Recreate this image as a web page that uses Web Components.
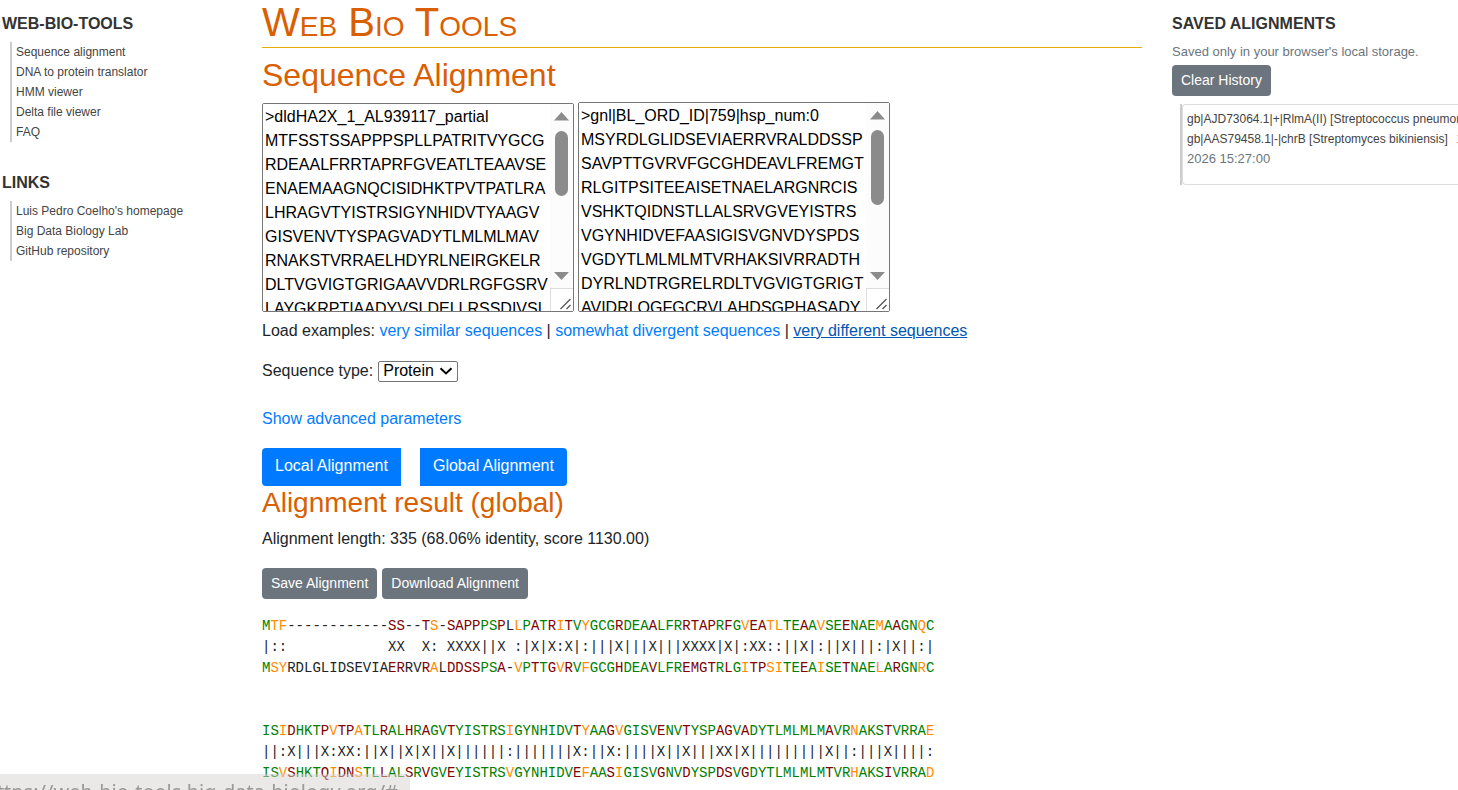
<!DOCTYPE html>
<html lang="en">
<head>
<meta charset="utf-8">
<title>Web Bio Tools – Sequence Alignment</title>
<style>
body { margin: 0; background: #fff; color: #212529; font: 16px/24px "Liberation Sans", Arial, sans-serif; }
</style>
</head>
<body>
<bio-app></bio-app>
<script>
function define(name, html, setup) {
  const template = document.createElement('template');
  template.innerHTML = html;
  customElements.define(name, class extends HTMLElement {
    connectedCallback() {
      if (this.shadowRoot) return;
      this.attachShadow({ mode: 'open' }).append(template.content.cloneNode(true));
      if (setup) setup(this, this.shadowRoot);
    }
  });
}

define('side-section', `
<style>
:host { display: block; }
h2 { margin: 0 0 6px; font-size: 16px; line-height: 24px; font-weight: 600; color: #333; text-transform: uppercase; }
</style>
<section><h2></h2><slot></slot></section>`, (el, root) => {
  root.querySelector('h2').textContent = el.getAttribute('heading');
});

define('link-list', `
<style>
:host { display: block; margin-left: 8px; border-left: 2px solid #ccc; padding-left: 4px; font-size: 12px; line-height: 20px; }
::slotted(a) { display: block; color: #444; text-decoration: none; }
</style>
<slot></slot>`);

define('bio-button', `
<style>
:host { display: inline-block; }
button { display: block; box-sizing: border-box; height: 38px; padding: 0 13px 2px; border: 0; border-radius: 4px; background: #007bff; color: #fff; font: inherit; white-space: nowrap; }
:host([small]) button { height: 31px; padding: 0 9px 2px; font-size: 14px; background: #6c757d; }
:host([edge="start"]) button { border-radius: 4px 0 0 4px; }
:host([edge="end"]) button { border-radius: 0 4px 4px 0; }
</style>
<button type="button"><slot></slot></button>`);

define('sequence-input', `
<style>
:host { display: block; position: relative; box-sizing: border-box; width: 312px; height: 210px; border: 1px solid #767676; border-radius: 2px; overflow: hidden; background: #fff; }
:host([short]) { height: 209px; }
textarea { display: block; box-sizing: border-box; width: 100%; height: 100%; margin: 0; padding: 1px 23px 1px 2px; border: 0; outline: 0; resize: none; overflow: hidden; white-space: pre; background: #fff; color: #000; font: inherit; }
.bar { position: absolute; top: 0; right: 0; bottom: 0; width: 23px; display: flex; flex-direction: column; align-items: center; background: #fcfcfc; }
svg { display: block; }
.thumb { width: 13px; height: 65px; border-radius: 7px; background: #8b8b8b; }
:host(:not([short])) .thumb { height: 75px; }
.space { flex: 1; }
.grip { border-top: 1px solid #ddd; border-left: 1px solid #ddd; background: #fff; }
</style>
<textarea spellcheck="false"></textarea>
<div class="bar" aria-hidden="true">
<svg width="23" height="27"><path d="M4 16.5 11.5 8 19 16.5z" fill="#8b8b8b"/></svg>
<div class="thumb"></div><div class="space"></div>
<svg width="23" height="18"><path d="M4 2 11.5 10 19 2z" fill="#8b8b8b"/></svg>
<svg class="grip" width="22" height="22"><path d="M9.500 20 19.500 10M15.500 20 19.500 16" stroke="#555" stroke-width="1.3" fill="none"/></svg>
</div>`, (el, root) => {
  const area = root.querySelector('textarea');
  area.value = el.getAttribute('value');
  area.setAttribute('aria-label', el.getAttribute('label'));
});

define('alignment-view', `
<style>
:host { display: block; }
pre { margin: 0; font: 14px/21px "Liberation Mono", "Courier New", monospace; color: #212529; }
.same { color: #008000; }
.close { color: #ff8c00; }
.differ { color: #800000; }
</style>
<pre></pre>`, (el, root) => {
  const kinds = { '|': 'same', ':': 'close', 'X': 'differ' };
  const [first, marks, second] = ['first', 'marks', 'second'].map(n => el.getAttribute(n));
  const pre = root.querySelector('pre');
  // Neighbouring residues with the same match mark share one coloured span.
  const colour = row => {
    for (let i = 0; i < row.length;) {
      let end = i + 1;
      while (end < row.length && marks[end] === marks[i]) end++;
      const span = document.createElement('span');
      if (kinds[marks[i]]) span.className = kinds[marks[i]];
      span.textContent = row.slice(i, end);
      pre.append(span);
      i = end;
    }
  };
  colour(first);
  pre.append('\n' + marks + '\n');
  colour(second);
});

define('saved-entry', `
<style>
:host { display: block; margin: 8px 0 0 8px; border-left: 2px solid #ccc; font-size: 12px; line-height: 20px; color: #444; }
article { border: 1px solid #ddd; border-right: 0; border-radius: 4px 0 0 4px; padding: 4px 0 15px 4px; }
div { white-space: nowrap; overflow: hidden; }
time { color: #6c757d; font-size: 13px; }
.start { margin-left: 5px; }
</style>
<article>
<div>gb|AJD73064.1|+|RlmA(II) [Streptococcus pneumoniae]</div>
<div>gb|AAS79458.1|-|chrB [Streptomyces bikiniensis] <time class="start">1</time></div>
<div><time>2026 15:27:00</time></div>
</article>`);

define('status-bubble', `
<style>
:host { position: fixed; left: 0; bottom: 0; width: 410px; height: 16px; overflow: hidden; background: rgba(215, 212, 209, .5); border-radius: 0 4px 0 0; color: #999; font: 20px/24px "Noto Sans", sans-serif; white-space: nowrap; }
div { display: flex; justify-content: flex-end; padding: 6px 12px 0 0; }
</style>
<div><slot></slot></div>`);

define('alignment-page', `
<style>
:host { display: block; min-width: 0; }
h1, h2, h3 { margin: 0; font-weight: 400; color: #d95f02; }
h1 { font-size: 40px; line-height: 44px; font-variant: small-caps; padding-bottom: 3px; border-bottom: 1px solid #e6ab02; }
h2 { font-size: 32px; line-height: 38px; margin: 8px 0; }
h3 { font-size: 28px; line-height: 33px; margin-bottom: 8px; }
p { margin: 0; }
a { color: #007bff; text-decoration: none; }
a.active { color: #0056b3; text-decoration: underline; }
.inputs { display: flex; align-items: flex-end; gap: 4px; margin-bottom: 7px; }
.type { margin: 16px 0 24px; display: flex; align-items: center; gap: 5px; }
.pick { display: inline-grid; align-items: center; }
select, .pick svg { grid-area: 1 / 1; }
select { appearance: none; box-sizing: border-box; width: 80px; height: 21px; margin: 0; padding: 0 4px; border: 1px solid #767676; border-radius: 2px; background: #fff; color: #000; font: inherit; line-height: 18px; }
.pick svg { justify-self: end; margin-right: 5px; pointer-events: none; }
.run { display: flex; gap: 19px; margin-top: 17px; }
.save { display: flex; gap: 5px; margin: 17px 0; }
alignment-view { margin-bottom: 42px; }
alignment-view:last-of-type { margin-bottom: 0; }
</style>
<main>
<h1>Web Bio Tools</h1>
<h2>Sequence Alignment</h2>
<div class="inputs">
<sequence-input short label="First sequence" value=">dldHA2X_1_AL939117_partial
MTFSSTSSAPPPSPLLPATRITVYGCG
RDEAALFRRTAPRFGVEATLTEAAVSE
ENAEMAAGNQCISIDHKTPVTPATLRA
LHRAGVTYISTRSIGYNHIDVTYAAGV
GISVENVTYSPAGVADYTLMLMLMAV
RNAKSTVRRAELHDYRLNEIRGKELR
DLTVGVIGTGRIGAAVVDRLRGFGSRV
LAYGKRPTIAADYVSLDELLRSSDIVSL"></sequence-input>
<sequence-input label="Second sequence" value=">gnl|BL_ORD_ID|759|hsp_num:0
MSYRDLGLIDSEVIAERRVRALDDSSP
SAVPTTGVRVFGCGHDEAVLFREMGT
RLGITPSITEEAISETNAELARGNRCIS
VSHKTQIDNSTLLALSRVGVEYISTRS
VGYNHIDVEFAASIGISVGNVDYSPDS
VGDYTLMLMLMTVRHAKSIVRRADTH
DYRLNDTRGRELRDLTVGVIGTGRIGT
AVIDRLQGFGCRVLAHDSGPHASADY"></sequence-input>
</div>
<p>Load examples: <a href="#">very similar sequences</a> | <a href="#">somewhat divergent sequences</a> | <a class="active" href="#">very different sequences</a></p>
<div class="type"><label for="type">Sequence type:</label><span class="pick"><select id="type"><option>Protein</option><option>DNA</option></select><svg width="14" height="8" viewBox="0 0 14 8"><path d="M1.500 1.200 7 6.400 12.500 1.200" fill="none" stroke="#000" stroke-width="2"/></svg></span></div>
<p><a href="#">Show advanced parameters</a></p>
<div class="run"><bio-button edge="start">Local Alignment</bio-button><bio-button edge="end">Global Alignment</bio-button></div>
<h3>Alignment result (global)</h3>
<p>Alignment length: 335 (68.06% identity, score 1130.00)</p>
<div class="save"><bio-button small>Save Alignment</bio-button><bio-button small>Download Alignment</bio-button></div>
<alignment-view
 first="MTF------------SS--TS-SAPPPSPLLPATRITVYGCGRDEAALFRRTAPRFGVEATLTEAAVSEENAEMAAGNQC"
 marks="|::            XX  X: XXXX||X :|X|X:X|:|||X|||X|||XXXX|X|:XX::||X|:||X|||:|X||:|"
 second="MSYRDLGLIDSEVIAERRVRALDDSSPSA-VPTTGVRVFGCGHDEAVLFREMGTRLGITPSITEEAISETNAELARGNRC"></alignment-view>
<alignment-view
 first="ISIDHKTPVTPATLRALHRAGVTYISTRSIGYNHIDVTYAAGVGISVENVTYSPAGVADYTLMLMLMAVRNAKSTVRRAE"
 marks="||:X|||X:XX:||X||X|X||X||||||:|||||||X:||X:||||X||X|||XX|X|||||||||X||:|||X||||:"
 second="ISVSHKTQIDNSTLLALSRVGVEYISTRSVGYNHIDVEFAASIGISVGNVDYSPDSVGDYTLMLMLMTVRHAKSIVRRAD"></alignment-view>
</main>`);

define('bio-app', `
<style>
:host { display: grid; grid-template-columns: 230px minmax(0, 1fr) 286px; gap: 30px; padding-left: 2px; }
nav, aside { padding-top: 12px; min-width: 0; }
nav { display: flex; flex-direction: column; gap: 29px; }
small { display: block; font-size: 13px; line-height: 20px; color: #6c757d; margin-bottom: 3px; }
</style>
<nav>
<side-section heading="Web-Bio-Tools"><link-list>
<a href="#">Sequence alignment</a><a href="#">DNA to protein translator</a><a href="#">HMM viewer</a><a href="#">Delta file viewer</a><a href="#">FAQ</a>
</link-list></side-section>
<side-section heading="Links"><link-list>
<a href="#">Luis Pedro Coelho's homepage</a><a href="#">Big Data Biology Lab</a><a href="#">GitHub repository</a>
</link-list></side-section>
</nav>
<alignment-page></alignment-page>
<aside>
<side-section heading="Saved alignments">
<small>Saved only in your browser's local storage.</small>
<bio-button small>Clear History</bio-button>
<saved-entry></saved-entry>
</side-section>
</aside>
<status-bubble>https://web-bio-tools.big-data-biology.org/#</status-bubble>`);
</script>
</body>
</html>
